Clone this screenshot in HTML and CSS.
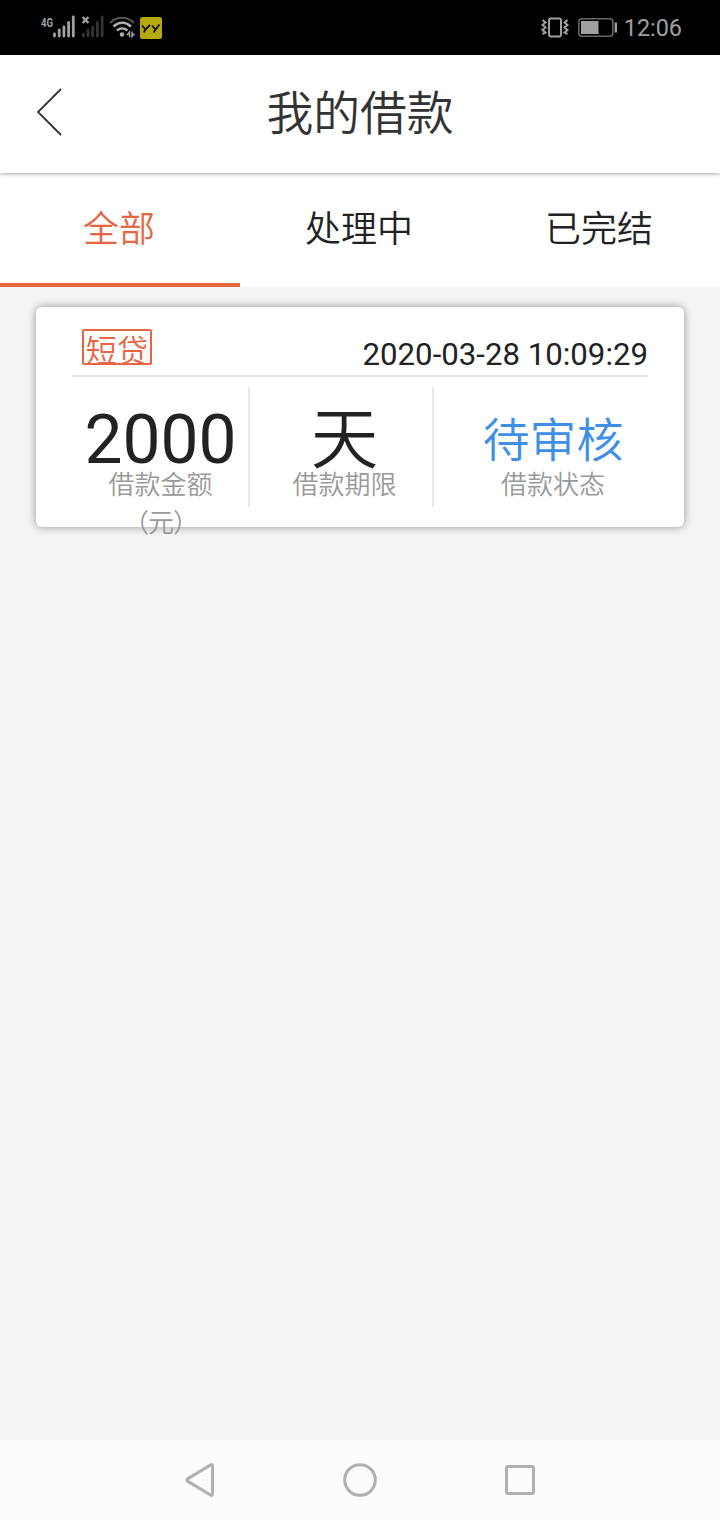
FILE: index.html
```html
<!DOCTYPE html>
<html lang="zh-CN">
<head>
    <meta charset="UTF-8">
    <meta name="viewport" content="width=device-width, initial-scale=1.0">
    <title>我的借款</title>
    <link rel="stylesheet" href="styles.css">
</head>
<body>
    <div class="status-bar">
        <svg class="status-left" width="124" height="26" viewBox="0 0 124 26" fill="none">
            <text class="network" x="1" y="12.500" textLength="12" lengthAdjust="spacingAndGlyphs">4G</text>
            <path d="M14.500 22v-2M19.200 22v-6M23.900 22v-9M28.600 22V8.500M33.300 22V3" stroke="#a0a0a0" stroke-width="2.800" stroke-linecap="round"/>
            <path d="M42.500 3l6 6M48.500 3l-6 6" stroke="#a0a0a0" stroke-width="2.300"/>
            <path d="M43.300 22v-2M48 22v-6M52.700 22v-9M57.400 22V8.500M62.100 22V3" stroke="#343434" stroke-width="2.800" stroke-linecap="round"/>
            <path d="M70 9C77 2 87 2 94 9" stroke="#555" stroke-width="2"/>
            <path d="M73.500 12.500C79 7.500 85.500 7.500 91 12.500M77 16.500c3-2.800 7.500-2.800 10.500 0" stroke="#b0b0b0" stroke-width="2.400"/>
            <circle cx="82" cy="20.500" r="2.200" fill="#b0b0b0"/>
            <path d="M89.500 23v-5l-2.500 3M92 17.500v5l2.500-3" stroke="#a0a0a0" stroke-width="1.500"/>
            <rect x="100" y="3" width="22" height="22" rx="2.500" fill="#b5a90b"/>
            <path d="M102 11.500l3.500 4 4.500-4.500M105.700 15l-2 3.500M112 11.500l3.500 4 4-5M115.700 15l-2 3.500" stroke="#111" stroke-width="1.800"/>
        </svg>
        <div class="status-right">
            <svg width="80" height="26" viewBox="0 0 80 26" fill="none">
                <rect x="11" y="4.500" width="12" height="18" rx="2" stroke="#a0a0a0" stroke-width="2"/>
                <path d="M4.500 6l3 2.500-3 2.500 3 2.500-3 2.500 3 2.500-3 1.500M29.500 6l-3 2.500 3 2.500-3 2.500 3 2.500-3 2.500 3 1.500" stroke="#a0a0a0" stroke-width="2"/>
                <rect x="40.800" y="4.800" width="34" height="17.400" rx="3" stroke="#666" stroke-width="1.600"/>
                <rect x="43" y="7" width="17.500" height="13" fill="#a0a0a0"/>
                <path d="M77.800 8.500v10" stroke="#a0a0a0" stroke-width="2.400"/>
            </svg>
            <span class="clock">12:06</span>
        </div>
    </div>

    <div class="header">
        <svg class="back" width="28" height="50" viewBox="0 0 28 50" fill="none">
            <path d="M26 2L3 25l23 23" stroke="#333" stroke-width="1.800"/>
        </svg>
        <h1>我的借款</h1>
    </div>

    <div class="tabs">
        <div class="tab active">全部</div>
        <div class="tab">处理中</div>
        <div class="tab">已完结</div>
    </div>

    <div class="content">
        <div class="card">
            <div class="card-top">
                <span class="tag">短贷</span>
                <span class="date">2020-03-28 10:09:29</span>
            </div>
            <div class="card-info">
                <div class="item">
                    <div class="value amount">2000</div>
                    <div class="label">借款金额<br><span class="unit">（元）</span></div>
                </div>
                <div class="item term">
                    <div class="value">天</div>
                    <div class="label">借款期限</div>
                </div>
                <div class="item state">
                    <div class="value status">待审核</div>
                    <div class="label">借款状态</div>
                </div>
            </div>
        </div>
    </div>

    <div class="nav-bar">
        <svg width="40" height="40" viewBox="0 0 40 40"><path d="M32.500 5.500v29a1 1 0 0 1-1.500.8L7.500 21.200a1.300 1.300 0 0 1 0-2.400L31 4.700a1 1 0 0 1 1.500.8z"/></svg>
        <svg width="40" height="40" viewBox="0 0 40 40"><circle cx="20" cy="20" r="15.300"/></svg>
        <svg width="40" height="40" viewBox="0 0 40 40"><rect x="6.500" y="6.500" width="27" height="27" rx="1.500"/></svg>
    </div>
</body>
</html>
```
FILE: styles.css
```css
* {
    margin: 0;
    padding: 0;
    box-sizing: border-box;
}

body {
    display: flex;
    flex-direction: column;
    height: 1520px;
    font-family: Roboto, "Noto Sans CJK SC", sans-serif;
    font-weight: 350;
    background: #f4f4f4;
    color: #222;
}

svg {
    display: block;
}

.status-bar {
    display: flex;
    justify-content: space-between;
    height: 55px;
    padding: 14px 38px 0 40px;
    background: #000;
}

.network {
    font-size: 13px;
    font-weight: bold;
    fill: #a0a0a0;
}

.status-right {
    display: flex;
}

.clock {
    margin-left: 6px;
    font-size: 23.4px;
    font-weight: 400;
    line-height: 29px;
    color: #a0a0a0;
}

.header {
    display: grid;
    grid-template-columns: 60px 1fr 60px;
    align-items: center;
    position: relative;
    height: 118px;
    padding: 0 35px;
    background: #fff;
    box-shadow: 0 1px 4px rgba(0, 0, 0, 0.35);
}

.back {
    margin-top: -5px;
}

.header h1 {
    margin-top: -9px;
    font-size: 46.8px;
    font-weight: 350;
    text-align: center;
    color: #333;
}

.tabs {
    display: flex;
    height: 114px;
    background: #fff;
}

.tab {
    flex: 1;
    padding-right: 2px;
    font-size: 36px;
    line-height: 114px;
    text-align: center;
}

.tab.active {
    color: #e66543;
    box-shadow: inset 0 -4px #e66543;
}

.content {
    flex: 1;
    padding: 20px 36px;
}

.card {
    height: 220px;
    padding: 0 36px;
    background: #fff;
    border-radius: 6px;
    box-shadow: 0 0 8px rgba(0, 0, 0, 0.4);
}

.card-top {
    display: flex;
    justify-content: space-between;
    height: 70px;
    padding: 22px 0 0 10px;
    border-bottom: 2px solid #e8e8e8;
}

.tag {
    width: 70px;
    height: 36px;
    font-size: 31.2px;
    line-height: 42px;
    text-align: center;
    color: #e66543;
    border: 2px solid #e66543;
    border-radius: 2px;
}

.date {
    font-size: 31.2px;
    font-weight: 400;
    line-height: 52px;
}

.card-info {
    display: grid;
    grid-template-columns: 178px 184px 1fr;
    padding-top: 10px;
}

.item {
    height: 120px;
    padding-left: 1px;
    text-align: center;
    border-right: 2px solid #e8e8e8;
}

.item.term {
    padding-left: 7px;
}

.item.state {
    padding-left: 24px;
    border-right: none;
}

.value {
    height: 79px;
    font-size: 67.6px;
    line-height: 106px;
}

.value.amount {
    font-weight: 400;
}

.value.status {
    font-size: 46.8px;
    line-height: 108px;
    color: #3d8fe8;
}

.label {
    font-size: 26px;
    line-height: 38px;
    color: #999;
}

.unit {
    letter-spacing: -1px;
}

.nav-bar {
    display: flex;
    justify-content: center;
    gap: 120px;
    height: 80px;
    padding-top: 20px;
    background: #fcfcfc;
}

.nav-bar svg {
    fill: none;
    stroke: #b0b0b0;
    stroke-width: 3;
}
```
